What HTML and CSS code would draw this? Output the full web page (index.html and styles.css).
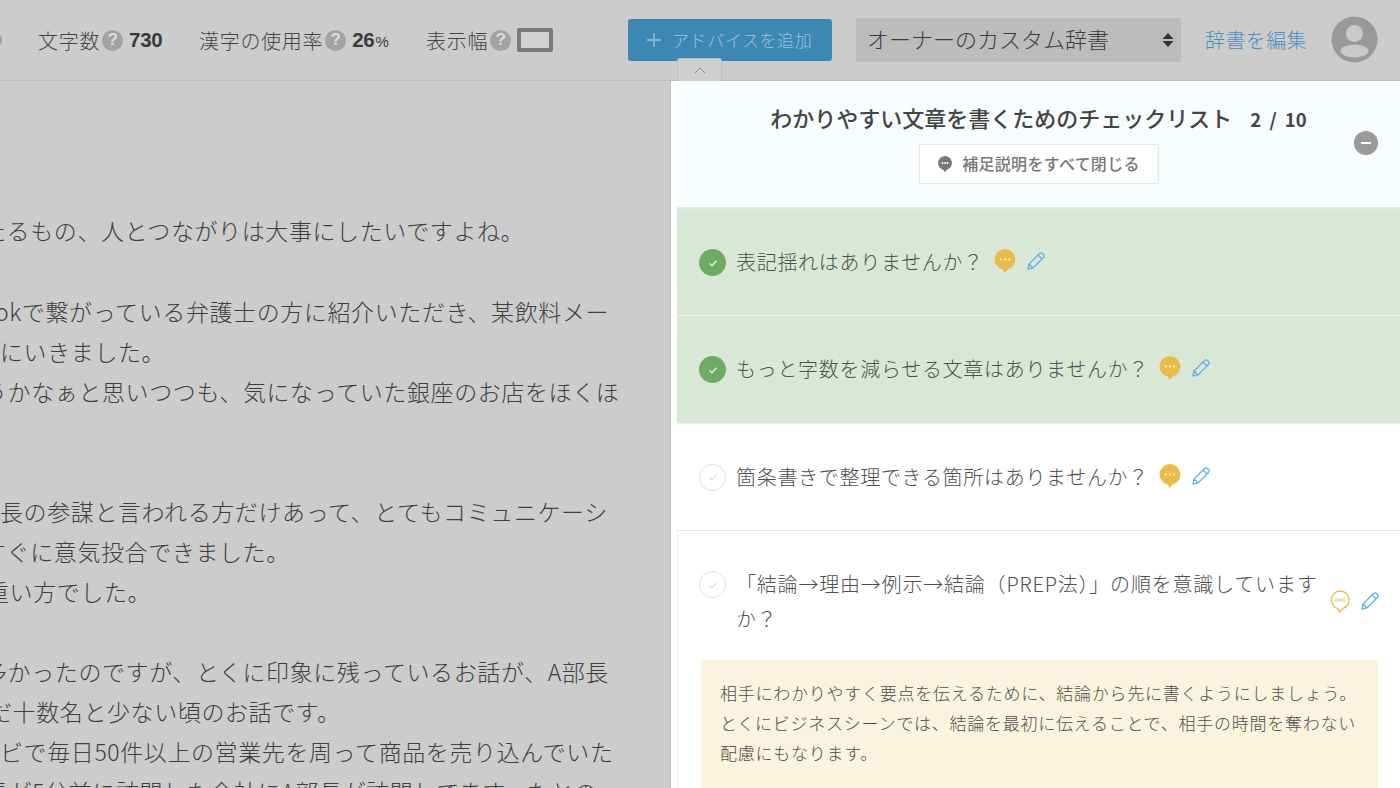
FILE: index.html
```html
<!DOCTYPE html>
<html lang="ja">
<head>
<meta charset="utf-8">
<title>チェックリスト</title>
<link rel="stylesheet" href="styles.css">
</head>
<body>
<div class="app">
  <header class="topbar">
    <span class="edge-dot"></span>
    <div class="stat stat-chars"><span>文字数</span><span class="q">?</span><b class="num">730</b></div>
    <div class="stat stat-kanji"><span>漢字の使用率</span><span class="q">?</span><b class="num">26<small>%</small></b></div>
    <div class="stat stat-width"><span>表示幅</span><span class="q">?</span><span class="width-box"></span></div>
    <button class="add-btn"><svg width="16" height="16" viewBox="0 0 16 16"><path d="M8 1v14M1 8h14" stroke="#9cc0d8" stroke-width="1.3" fill="none"/></svg><span>アドバイスを追加</span></button>
    <div class="dict"><span>オーナーのカスタム辞書</span><svg width="12" height="16" viewBox="0 0 12 16"><path d="M6 1l5.500 6h-11zM6 15l-5.500-6h11z" fill="#333"/></svg></div>
    <a class="dict-edit">辞書を編集</a>
    <svg class="avatar" width="48" height="48" viewBox="0 0 48 48"><circle cx="24.500" cy="23.500" r="23" fill="#999"/><circle cx="24.500" cy="17.500" r="8.500" fill="#c9c9c9"/><ellipse cx="24.500" cy="35" rx="14" ry="6.500" fill="#c9c9c9"/></svg>
    <span class="collapse-tab"><svg width="14" height="8" viewBox="0 0 14 8"><path d="M2 7l5-5 5 5" fill="none" stroke="#8a8a8a" stroke-width="1"/></svg></span>
  </header>
  <main class="content">
    <section class="editor">
      <p class="l1">たるもの、人とつながりは大事にしたいですよね。</p>
      <p>&nbsp;</p>
      <p class="l2">okで繋がっている弁護士の方に紹介いただき、某飲料メー</p>
      <p>にいきました。</p>
      <p class="l4">うかなぁと思いつつも、気になっていた銀座のお店をほくほ</p>
      <p>&nbsp;</p>
      <p>&nbsp;</p>
      <p>長の参謀と言われる方だけあって、とてもコミュニケーシ</p>
      <p class="l6">すぐに意気投合できました。</p>
      <p class="l7">重い方でした。</p>
      <p>&nbsp;</p>
      <p class="l8">多かったのですが、とくに印象に残っているお話が、A部長</p>
      <p class="l9">だ十数名と少ない頃のお話です。</p>
      <p>ビで毎日50件以上の営業先を周って商品を売り込んでいた</p>
      <p class="l11">長が5分前に訪問した会社にA部長が訪問してます。たとの</p>
    </section>
    <aside class="panel">
      <div class="panel-head">
        <h2 class="panel-title">わかりやすい文章を書くためのチェックリスト<span class="count">2 / 10</span></h2>
        <button class="close-all"><svg width="16" height="18" viewBox="0 0 16 18"><path d="M8 1a7 7 0 0 1 2 13.700L8 17l-2-2.300A7 7 0 0 1 8 1z" fill="#777"/><circle cx="5.500" cy="8" r="1" fill="#fff"/><circle cx="8" cy="8" r="1" fill="#fff"/><circle cx="10.500" cy="8" r="1" fill="#fff"/></svg><span>補足説明をすべて閉じる</span></button>
        <span class="minus"></span>
      </div>
      <div class="row done">
        <span class="check"><svg width="12" height="12" viewBox="0 0 12 12"><path d="M2.500 6.500l2.500 2.300 4.500-5" fill="none" stroke="#e8f0e4" stroke-width="1.300"/></svg></span>
        <span class="row-text">表記揺れはありませんか？</span>
        <svg class="bubble" width="22" height="24" viewBox="1 1 20 23"><path d="M11 1a10 10 0 0 1 3 19.500L10.500 24 9 20.800A10 10 0 0 1 11 1z" fill="#e9bc49"/><circle cx="7" cy="11" r="1.100" fill="#fbeec8"/><circle cx="11" cy="11" r="1.100" fill="#fbeec8"/><circle cx="15" cy="11" r="1.100" fill="#fbeec8"/></svg>
        <svg class="pen" width="20" height="20" viewBox="0 0 20 20"><path d="M2 18l1-5L13.500 2.500a2 2 0 0 1 3 0l1 1a2 2 0 0 1 0 3L7 17z M3 13l4 4 M12 4l4 4" fill="none" stroke="#5cb0e6" stroke-width="1.300"/></svg>
      </div>
      <div class="row done">
        <span class="check"><svg width="12" height="12" viewBox="0 0 12 12"><path d="M2.500 6.500l2.500 2.300 4.500-5" fill="none" stroke="#e8f0e4" stroke-width="1.300"/></svg></span>
        <span class="row-text">もっと字数を減らせる文章はありませんか？</span>
        <svg class="bubble" width="22" height="24" viewBox="1 1 20 23"><path d="M11 1a10 10 0 0 1 3 19.500L10.500 24 9 20.800A10 10 0 0 1 11 1z" fill="#e9bc49"/><circle cx="7" cy="11" r="1.100" fill="#fbeec8"/><circle cx="11" cy="11" r="1.100" fill="#fbeec8"/><circle cx="15" cy="11" r="1.100" fill="#fbeec8"/></svg>
        <svg class="pen" width="20" height="20" viewBox="0 0 20 20"><path d="M2 18l1-5L13.500 2.500a2 2 0 0 1 3 0l1 1a2 2 0 0 1 0 3L7 17z M3 13l4 4 M12 4l4 4" fill="none" stroke="#5cb0e6" stroke-width="1.300"/></svg>
      </div>
      <div class="row">
        <span class="check todo"><svg width="12" height="12" viewBox="0 0 12 12"><path d="M2.500 6.500l2.500 2.300 4.500-5" fill="none" stroke="#ccc" stroke-width="1"/></svg></span>
        <span class="row-text">箇条書きで整理できる箇所はありませんか？</span>
        <svg class="bubble" width="22" height="24" viewBox="1 1 20 23"><path d="M11 1a10 10 0 0 1 3 19.500L10.500 24 9 20.800A10 10 0 0 1 11 1z" fill="#e9bc49"/><circle cx="7" cy="11" r="1.100" fill="#fbeec8"/><circle cx="11" cy="11" r="1.100" fill="#fbeec8"/><circle cx="15" cy="11" r="1.100" fill="#fbeec8"/></svg>
        <svg class="pen" width="20" height="20" viewBox="0 0 20 20"><path d="M2 18l1-5L13.500 2.500a2 2 0 0 1 3 0l1 1a2 2 0 0 1 0 3L7 17z M3 13l4 4 M12 4l4 4" fill="none" stroke="#5cb0e6" stroke-width="1.300"/></svg>
      </div>
      <div class="row-open">
        <div class="open-head">
          <span class="check todo"><svg width="12" height="12" viewBox="0 0 12 12"><path d="M2.500 6.500l2.500 2.300 4.500-5" fill="none" stroke="#ccc" stroke-width="1"/></svg></span>
          <span class="row-text open-text">「結論→理由→例示→結論（PREP法）」の順を意識していますか？</span>
          <svg class="bubble-o" width="20" height="23" viewBox="0 0 20 23"><path d="M10 1a9 9 0 0 1 3 17.500L9.500 22 8 18.700A9 9 0 0 1 10 1z" fill="#fff" stroke="#e9bc49" stroke-width="1.300"/><circle cx="6.300" cy="10" r="1.300" fill="none" stroke="#e9bc49" stroke-width=".8"/><circle cx="10" cy="10" r="1.300" fill="none" stroke="#e9bc49" stroke-width=".8"/><circle cx="13.700" cy="10" r="1.300" fill="none" stroke="#e9bc49" stroke-width=".8"/></svg>
          <svg class="pen pen-o" width="20" height="20" viewBox="0 0 20 20"><path d="M2 18l1-5L13.500 2.500a2 2 0 0 1 3 0l1 1a2 2 0 0 1 0 3L7 17z M3 13l4 4 M12 4l4 4" fill="none" stroke="#5cb0e6" stroke-width="1.300"/></svg>
        </div>
        <div class="note">相手にわかりやすく要点を伝えるために、結論から先に書くようにしましょう。<br>とくにビジネスシーンでは、結論を最初に伝えることで、相手の時間を奪わない<br>配慮にもなります。</div>
      </div>
    </aside>
  </main>
</div>
</body>
</html>
```
FILE: styles.css
```css
* { box-sizing: border-box; }
html, body { margin: 0; height: 100%; overflow: hidden; }
body { font-family: "Noto Sans CJK JP", "Noto Sans", sans-serif; color: #444; background: #ccc; }
.app { width: 1400px; height: 788px; display: flex; flex-direction: column; overflow: hidden; }
.topbar { height: 81px; flex: none; background: #ccc; border-bottom: 1px solid #bdbdbd; display: flex; align-items: center; position: relative; padding-left: 38px; }
.edge-dot { position: absolute; left: -20px; top: 29px; width: 22px; height: 22px; border-radius: 50%; background: #a3a3a3; }
.stat { display: flex; align-items: center; font-size: 20px; letter-spacing: .7px; color: #444; font-weight: 300; }
.stat-chars { width: 161px; }
.stat-kanji { width: 227px; }
.stat-width { width: 202px; }
.q { width: 21px; height: 21px; margin-left: 2px; border-radius: 50%; background: #a3a3a3; color: #ddd; font-size: 17px; font-weight: 700; letter-spacing: 0; display: flex; align-items: center; justify-content: center; font-family: "Liberation Sans", sans-serif; }
.num { margin-left: 6px; font-family: "Liberation Sans", sans-serif; font-size: 20.500px; font-weight: 700; color: #3a3a3a; letter-spacing: -.3px; }
.num small { font-size: 15px; font-weight: 400; margin-left: 1px; }
.width-box { width: 36px; height: 24px; margin-left: 6px; border: 4px solid #7b7b7b; border-radius: 2px; background: #d2d2d2; }
.add-btn { width: 204px; height: 42px; flex: none; margin-top: -1px; border: 0; border-radius: 3px; background: #3d87b5; color: #9cc0d8; font: 300 17px "Noto Sans CJK JP", sans-serif; letter-spacing: .6px; display: flex; align-items: center; padding: 0 0 0 18px; gap: 10px; }
.dict { width: 325px; height: 44px; flex: none; margin-left: 24px; background: #bcbcbc; font-size: 22px; line-height: 1; font-weight: 300; color: #3c3c3c; display: flex; align-items: center; justify-content: space-between; padding: 0 7px 4px 11px; }
.dict svg { margin-top: 4px; }
.dict-edit { width: 103px; flex: none; margin: -2px 0 0 24px; font-size: 20px; letter-spacing: .4px; font-weight: 300; color: #4a90bd; white-space: nowrap; }
.avatar { flex: none; margin-left: 22px; }
.collapse-tab { position: absolute; left: 677px; top: 58px; width: 45px; height: 23px; background: #cfcfcf; border: 1px solid #bdbdbd; border-bottom: 0; border-radius: 3px 3px 0 0; display: flex; align-items: center; justify-content: center; }
.content { flex: 1; display: flex; min-height: 0; }
.editor { width: 671px; flex: none; overflow: hidden; background: #ccc; padding: 130px 0 0 0; border-right: 1px solid #bfbfbf; font-size: 23px; font-weight: 300; color: #3f3f3f; }
.editor p { margin: 0; height: 40px; line-height: 40px; white-space: nowrap; letter-spacing: .6px; }
.editor .l1 { margin-left: -17px; line-height: 38px; }
.editor .l2 { margin-left: -5px; }
.editor .l4 { margin-left: -16px; }
.editor .l6 { margin-left: -17px; }
.editor .l7 { margin-left: -14px; }
.editor .l8 { margin-left: -16px; }
.editor .l9 { margin-left: -11px; }
.editor .l11 { margin-left: -15px; }
.panel { width: 729px; flex: none; background: #fff; border-left: 6px solid #fff; box-shadow: inset 1px 0 0 #eee; position: relative; }
.panel-head { height: 128px; background: #f7fdff; border-bottom: 2px solid #e5e9e5; text-align: center; position: relative; padding: 16px 0 0 0; }
.panel-title { margin: 0; font-size: 22px; font-weight: 500; color: #444; line-height: 40px; }
.count { margin-left: 18px; font-size: 18.500px; font-weight: 700; word-spacing: 4px; }
.close-all { height: 40px; width: 240px; margin-top: 5px; background: #fff; border: 1px solid #e6e6e6; border-radius: 2px; font: 500 16px "Noto Sans CJK JP", sans-serif; letter-spacing: .3px; color: #777; display: inline-flex; align-items: center; justify-content: center; gap: 9px; }
.close-all span { margin-top: -3px; }
.minus { position: absolute; right: 22px; top: 50px; width: 24px; height: 24px; border-radius: 50%; background: #9a9a9a; }
.minus::after { content: ""; position: absolute; left: 7px; top: 11px; width: 10px; height: 2px; background: #fff; }
.row { height: 107.400px; padding: 39px 0 0 22px; display: flex; align-items: flex-start; border-bottom: 1px solid #e8e8e8; background: #fff; }
.row.done { background: #d9e8d6; border-bottom-color: #eef1ec; }
.check { width: 27px; height: 27px; flex: none; border-radius: 50%; background: #70ab65; display: flex; align-items: center; justify-content: center; margin-top: 1px; }
.check.todo { background: #fff; border: 1.500px solid #dedede; }
.row-text { margin-left: 10px; font-size: 20px; font-weight: 300; color: #4f4f4f; line-height: 28px; letter-spacing: .7px; white-space: nowrap; }
.bubble { margin: 1px 0 0 10px; flex: none; }
.pen { margin-left: 10px; flex: none; margin-top: 3px; }
.row-open { padding: 35px 22px 0 22px; }
.open-head { display: flex; align-items: center; }
.open-head .check { align-self: flex-start; margin-top: 5px; }
.open-text { white-space: normal; width: 582px; line-height: 35px; letter-spacing: .8px; flex: none; }
.bubble-o { flex: none; margin-left: 12px; }
.pen-o { margin-left: 10px; margin-top: 0; }
.note { margin: 24px 0 0 2px; background: #fbf3dd; border-radius: 3px; padding: 18px 19px 20px; font-size: 17px; letter-spacing: .75px; font-weight: 300; line-height: 30px; color: #4f4f4f; height: 130px; white-space: nowrap; }
```
